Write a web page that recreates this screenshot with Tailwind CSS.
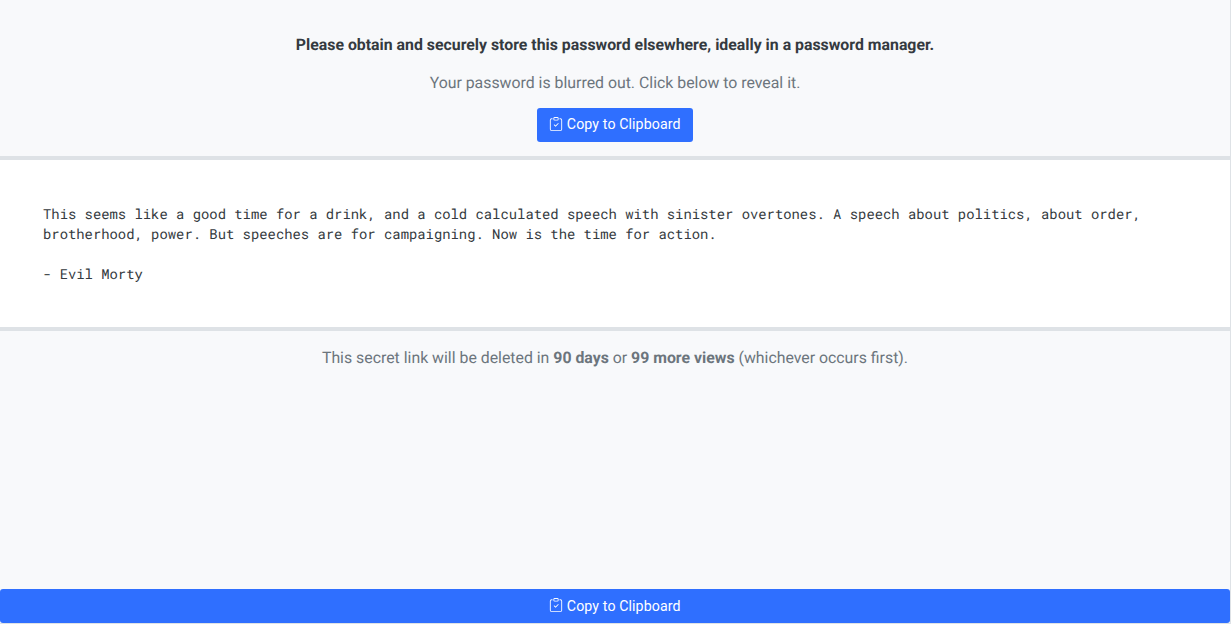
<!DOCTYPE html>
<html lang="en"><head><meta charset="utf-8"><title>Secret</title><script src="https://cdn.jsdelivr.net/npm/@tailwindcss/browser@4"></script></head>
<body class="h-[625px] overflow-hidden bg-white font-['Roboto',sans-serif] text-[#343a40] [text-rendering:geometricPrecision]">
<main class="flex h-[624px] w-[1231px] flex-col border-r border-b border-[#dee2e6] bg-[#f8f9fb] text-[15.85px] leading-6">
<header class="flex h-[156px] flex-col items-center pt-[33px]">
<p class="font-bold">Please obtain and securely store this password elsewhere, ideally in a password manager.</p>
<p class="mt-[14px] text-[#6c757d]">Your password is blurred out. Click below to reveal it.</p>
<button class="mt-[13px] flex h-[34px] w-[156px] items-center justify-center gap-[3.500px] rounded-[3px] bg-[#2f6fff] pb-0.5 text-[14.2px] tracking-[0.1px] text-white">
<svg class="size-[14px]" viewBox="0 0 16 16" fill="currentColor"><path fill-rule="evenodd" d="M10.854 7.146a.5.5 0 0 1 0 .708l-3 3a.5.5 0 0 1-.708 0l-1.5-1.5a.5.5 0 1 1 .708-.708L7.5 9.793l2.646-2.647a.5.5 0 0 1 .708 0"/><path d="M4 1.5H3a2 2 0 0 0-2 2V14a2 2 0 0 0 2 2h10a2 2 0 0 0 2-2V3.500a2 2 0 0 0-2-2h-1v1h1a1 1 0 0 1 1 1V14a1 1 0 0 1-1 1H3a1 1 0 0 1-1-1V3.500a1 1 0 0 1 1-1h1z"/><path d="M9.500 1a.5.5 0 0 1 .5.5v1a.5.5 0 0 1-.5.5h-3a.5.5 0 0 1-.5-.5v-1a.5.5 0 0 1 .5-.5zm-3-1A1.500 1.500 0 0 0 5 1.500v1A1.500 1.500 0 0 0 6.500 4h3A1.500 1.500 0 0 0 11 2.500v-1A1.500 1.500 0 0 0 9.500 0z"/></svg>Copy to Clipboard</button>
</header>
<section class="h-[175px] border-y-4 border-[#dee2e6] bg-white px-[43px] pt-[44px]">
<pre class="font-['Roboto_Mono','DejaVu_Sans_Mono',monospace] text-[13.865px] leading-5">This seems like a good time for a drink, and a cold calculated speech with sinister overtones. A speech about politics, about order,
brotherhood, power. But speeches are for campaigning. Now is the time for action.

- Evil Morty</pre>
</section>
<p class="mt-[15px] text-center text-[#6c757d]">This secret link will be deleted in <b>90 days</b> or <b>99 more views</b> (whichever occurs first).</p>
<button class="mt-auto flex h-[34px] w-full items-center justify-center gap-[3.500px] rounded-[3px] bg-[#2f6fff] text-[14.2px] tracking-[0.1px] text-white">
<svg class="mb-0.5 size-[14px]" viewBox="0 0 16 16" fill="currentColor"><path fill-rule="evenodd" d="M10.854 7.146a.5.5 0 0 1 0 .708l-3 3a.5.5 0 0 1-.708 0l-1.5-1.5a.5.5 0 1 1 .708-.708L7.5 9.793l2.646-2.647a.5.5 0 0 1 .708 0"/><path d="M4 1.5H3a2 2 0 0 0-2 2V14a2 2 0 0 0 2 2h10a2 2 0 0 0 2-2V3.500a2 2 0 0 0-2-2h-1v1h1a1 1 0 0 1 1 1V14a1 1 0 0 1-1 1H3a1 1 0 0 1-1-1V3.500a1 1 0 0 1 1-1h1z"/><path d="M9.500 1a.5.5 0 0 1 .5.5v1a.5.5 0 0 1-.5.5h-3a.5.5 0 0 1-.5-.5v-1a.5.5 0 0 1 .5-.5zm-3-1A1.500 1.500 0 0 0 5 1.500v1A1.500 1.500 0 0 0 6.500 4h3A1.500 1.500 0 0 0 11 2.500v-1A1.500 1.500 0 0 0 9.500 0z"/></svg>Copy to Clipboard</button>
</main></body></html>
